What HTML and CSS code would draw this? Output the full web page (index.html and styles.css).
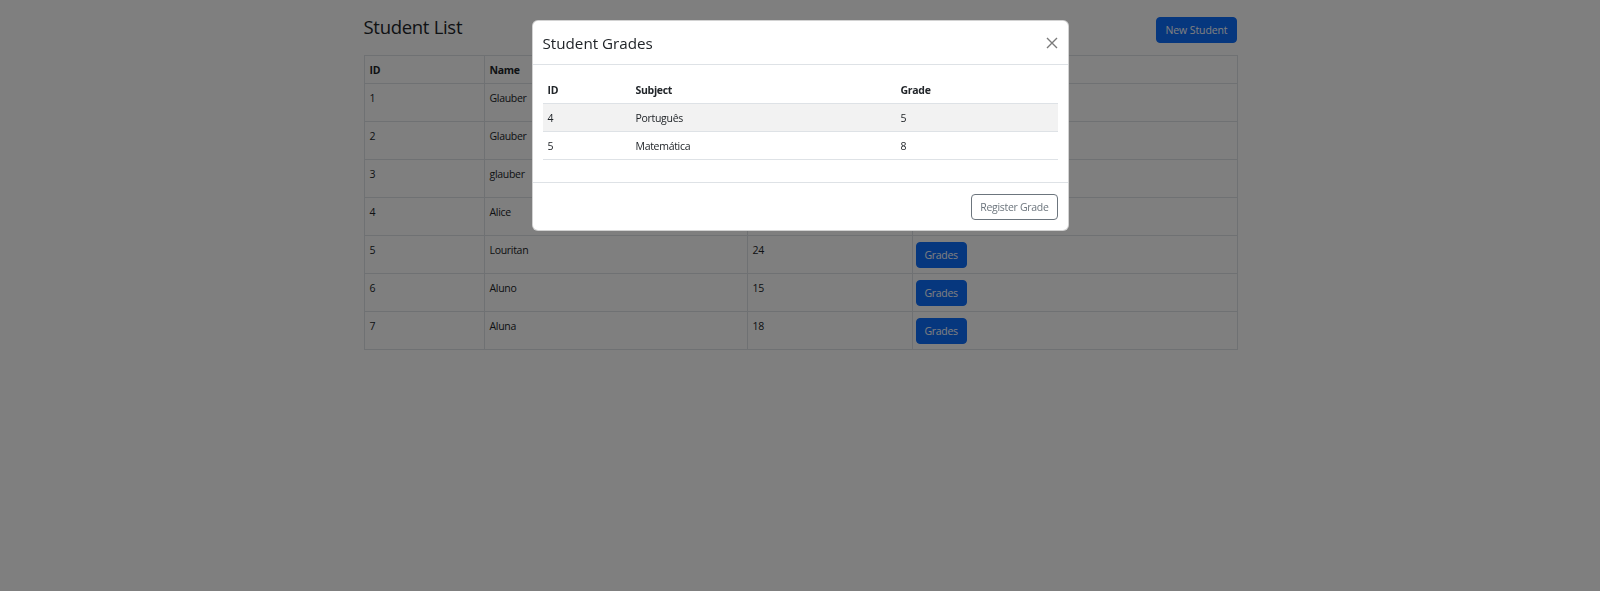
FILE: index.html
```html
<!DOCTYPE html>
<html lang="en">
<head>
<meta charset="utf-8">
<title>Student List</title>
<link rel="stylesheet" href="styles.css">
</head>
<body>
<div class="page">
  <div class="topbar">
    <h1 class="title">Student List</h1>
    <button class="btn btn-primary">New Student</button>
  </div>
  <table class="students">
    <colgroup>
      <col class="c-id"><col class="c-name"><col class="c-age"><col class="c-act">
    </colgroup>
    <thead>
      <tr><th>ID</th><th>Name</th><th>Age</th><th></th></tr>
    </thead>
    <tbody>
      <tr><td>1</td><td>Glauber</td><td>30</td><td><button class="btn btn-primary">Grades</button></td></tr>
      <tr><td>2</td><td>Glauber</td><td>30</td><td><button class="btn btn-primary">Grades</button></td></tr>
      <tr><td>3</td><td>glauber</td><td>30</td><td><button class="btn btn-primary">Grades</button></td></tr>
      <tr><td>4</td><td>Alice</td><td>20</td><td><button class="btn btn-primary">Grades</button></td></tr>
      <tr><td>5</td><td>Louritan</td><td>24</td><td><button class="btn btn-primary">Grades</button></td></tr>
      <tr><td>6</td><td>Aluno</td><td>15</td><td><button class="btn btn-primary">Grades</button></td></tr>
      <tr><td>7</td><td>Aluna</td><td>18</td><td><button class="btn btn-primary">Grades</button></td></tr>
    </tbody>
  </table>
</div>

<div class="backdrop">
  <div class="modal">
    <div class="modal-header">
      <h5 class="modal-title">Student Grades</h5>
      <button class="close" aria-label="Close">
        <svg width="12" height="12" viewBox="0 0 12 12"><path d="M1 1L11 11M11 1L1 11" stroke="#7a7a7a" stroke-width="1.4" fill="none"/></svg>
      </button>
    </div>
    <div class="modal-body">
      <table class="grades">
        <colgroup><col class="g-id"><col class="g-sub"><col class="g-grade"></colgroup>
        <thead>
          <tr><th>ID</th><th>Subject</th><th>Grade</th></tr>
        </thead>
        <tbody>
          <tr><td>4</td><td>Português</td><td>5</td></tr>
          <tr><td>5</td><td>Matemática</td><td>8</td></tr>
        </tbody>
      </table>
    </div>
    <div class="modal-footer">
      <button class="btn btn-outline">Register Grade</button>
    </div>
  </div>
</div>
</body>
</html>
```

FILE: styles.css
```css
html, body {
  margin: 0;
}
body {
  font-family: "Open Sans", "Noto Sans", sans-serif;
  font-size: 10.5px;
  letter-spacing: -0.3px;
  line-height: 16px;
  color: #212529;
  background: #fff;
}
.page {
  width: 873px;
  margin: 0 auto;
}
.topbar {
  display: flex;
  justify-content: space-between;
  align-items: flex-start;
  padding-top: 15px;
  margin-bottom: 12px;
}
.title {
  margin: 0;
  font-size: 18.5px;
  letter-spacing: -0.3px;
  line-height: 24px;
  font-weight: 400;
}
.btn {
  font: inherit;
  letter-spacing: inherit;
  line-height: 16px;
  padding: 4px 8px;
  border: 1px solid transparent;
  border-radius: 4px;
  cursor: pointer;
}
.btn-primary {
  background: #0d6efd;
  border-color: #0d6efd;
  color: #fff;
}
.btn-outline {
  background: #fff;
  border-color: #6c757d;
  color: #6c757d;
}
.topbar .btn {
  margin-top: 2px;
  letter-spacing: -0.1px;
}
.students {
  width: 873px;
  border-collapse: collapse;
  table-layout: fixed;
}
.c-id { width: 120px; }
.c-name { width: 263px; }
.c-age { width: 165px; }
.c-act { width: 325px; }
.students th, .students td {
  border: 1px solid #dee2e6;
  padding: 6px 5px 5px;
  text-align: left;
  vertical-align: top;
}
.students td:last-child {
  padding-left: 3px;
}
.students th {
  font-weight: 700;
}
.students td .btn {
  display: block;
}

.backdrop {
  position: fixed;
  inset: 0;
  background: rgba(0, 0, 0, 0.5);
}
.modal {
  box-sizing: border-box;
  width: 537px;
  margin: 20px auto 0;
  background: #fff;
  border: 1px solid rgba(0, 0, 0, 0.175);
  border-radius: 6px;
}
.modal-header {
  box-sizing: border-box;
  height: 44px;
  display: flex;
  align-items: center;
  justify-content: space-between;
  padding: 0 10px;
  border-bottom: 1px solid #dee2e6;
}
.modal-title {
  margin: 0;
  font-size: 15.2px;
  letter-spacing: 0;
  line-height: 24px;
  font-weight: 400;
}
.close {
  background: none;
  border: 0;
  padding: 0;
  width: 12px;
  height: 12px;
  display: flex;
}
.modal-body {
  padding: 11px 10px 22px;
}
.grades {
  width: 100%;
  border-collapse: collapse;
  table-layout: fixed;
}
.g-id { width: 88px; }
.g-sub { width: 265px; }
.g-grade { width: 162px; }
.grades th, .grades td {
  padding: 6px 5px 5px;
  border-bottom: 1px solid #dee2e6;
  text-align: left;
  vertical-align: top;
}
.grades th {
  font-weight: 700;
}
.grades tbody tr:nth-child(odd) td {
  background: #f2f2f2;
}
.modal-footer {
  display: flex;
  justify-content: flex-end;
  padding: 11px 10px 10px;
  border-top: 1px solid #dee2e6;
}
```
